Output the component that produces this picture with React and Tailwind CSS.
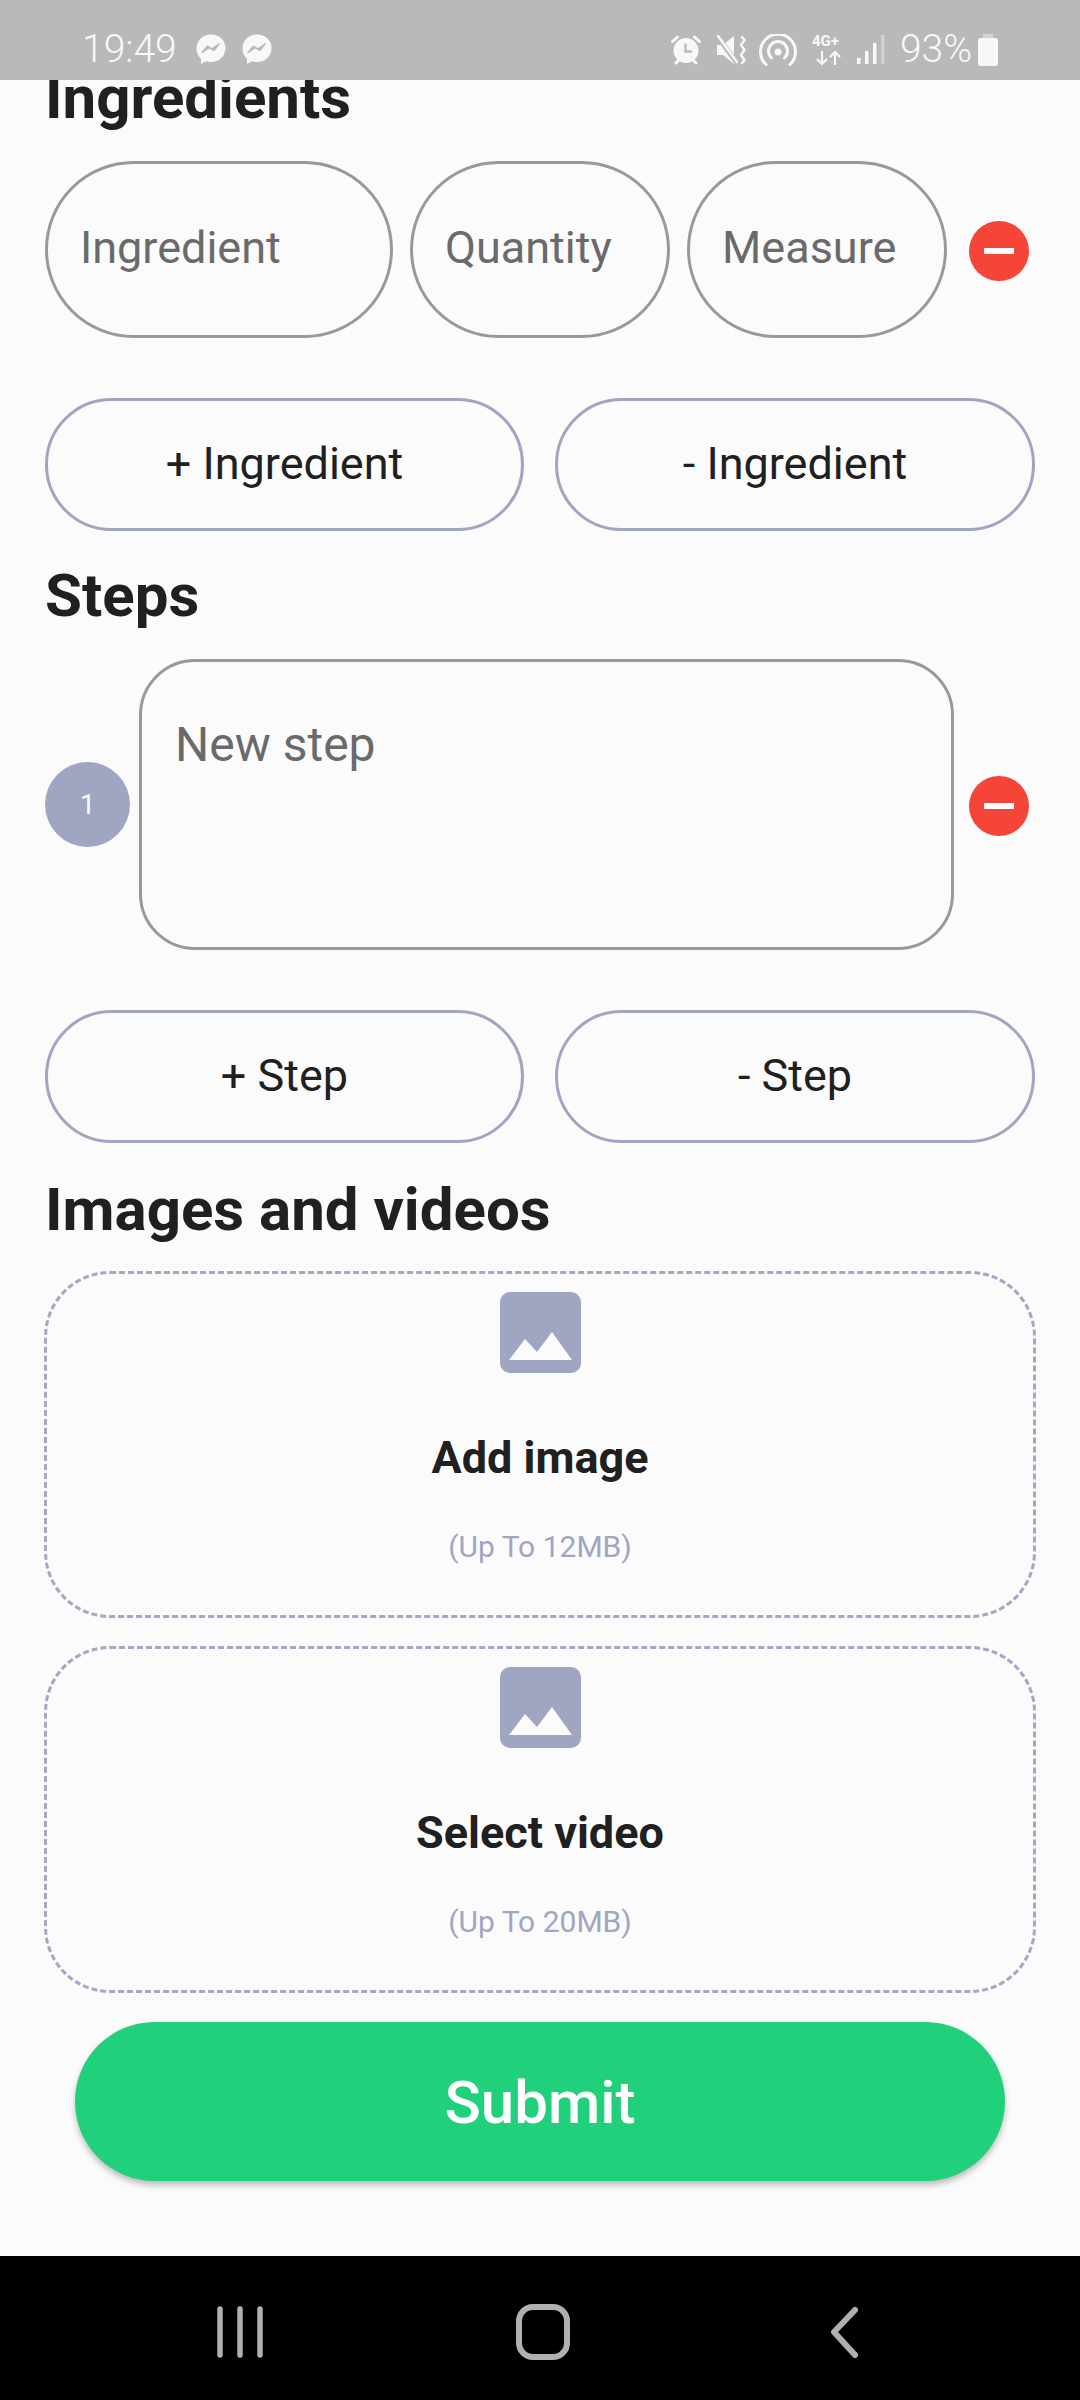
const font = { fontFamily: "Roboto, sans-serif" };

function Messenger() {
  return (
    <svg width="30" height="31" viewBox="0 0 30 31">
      <path
        d="M15 0.5C6.8 0.5 0.5 6.5 0.5 14.5c0 4.2 1.7 7.8 4.5 10.3v5.2l4.9-2.7c1.6.5 3.3.7 5.1.7 8.2 0 14.5-6 14.5-14S23.2.5 15 .5z"
        fill="#f8f8f8"
      />
      <path d="M6 18.5l5.4-6.4 4.2 3.2 7.6-5.6-5.4 6.8-4.2-3.2z" fill="#b9b9b9" stroke="#b9b9b9" strokeWidth="1.4" strokeLinejoin="round" />
    </svg>
  );
}

function StatusIcons() {
  return (
    <div className="flex items-center">
      {/* alarm */}
      <svg width="30" height="30" viewBox="0 0 30 30" className="mr-[15px]">
        <circle cx="15" cy="15.5" r="12.5" fill="#f8f8f8" />
        <path d="M14.5 8.5v8h6.5" fill="none" stroke="#b9b9b9" strokeWidth="2.4" />
        <path d="M1.5 6.5L6.5 2M28.5 6.5L23.5 2M5 28l2.5-2.5M25 28l-2.5-2.5" stroke="#f8f8f8" strokeWidth="3" strokeLinecap="round" />
      </svg>
      {/* mute + vibrate */}
      <svg width="30" height="30" viewBox="0 0 30 30" className="mr-[13px]">
        <path d="M1 10h6l11-9v28L7 20H1z" fill="#f8f8f8" />
        <path d="M1 1l20 27" stroke="#b9b9b9" strokeWidth="5" />
        <path d="M2 1l19 26" stroke="#f8f8f8" strokeWidth="2.5" strokeLinecap="round" />
        <path d="M26 2l2.5 3-3.5 5 3.5 5-3.5 5 3.5 5-2.5 3" fill="none" stroke="#f8f8f8" strokeWidth="2.4" strokeLinecap="round" />
      </svg>
      {/* hotspot */}
      <svg width="38" height="32" viewBox="0 0 38 32" className="mr-[15px]">
        <path d="M7 30.5A17.5 17.5 0 1 1 31 30.5" fill="none" stroke="#f8f8f8" strokeWidth="3" strokeLinecap="round" />
        <path d="M12.5 24A9.5 9.5 0 1 1 25.5 24" fill="none" stroke="#f8f8f8" strokeWidth="3" strokeLinecap="round" />
        <circle cx="19" cy="18" r="3.5" fill="#f8f8f8" />
      </svg>
      {/* 4G+ */}
      <div className="relative mr-[12px] h-[32px] w-[33px]">
        <div className="text-[15px] font-bold leading-[15px] text-[#f8f8f8]">4G+</div>
        <svg width="33" height="16" viewBox="0 0 33 16" className="absolute bottom-0 left-0">
          <path d="M10 1v13M5 9l5 5 5-5M23 15V2M18 7l5-5 5 5" fill="none" stroke="#f8f8f8" strokeWidth="2.2" />
        </svg>
      </div>
      {/* signal */}
      <svg width="28" height="30" viewBox="0 0 28 30" className="mr-[15px]">
        <rect x="0" y="23" width="3.5" height="6" fill="#f8f8f8" />
        <rect x="8" y="16" width="3.5" height="13" fill="#f8f8f8" />
        <rect x="16" y="8" width="3.5" height="21" fill="#f8f8f8" />
        <rect x="24" y="0" width="3.5" height="29" fill="#d0d0d0" />
      </svg>
      <span className="mr-[6px] text-[39px] font-light leading-none text-[#f8f8f8]">93%</span>
      {/* battery */}
      <svg width="20" height="32" viewBox="0 0 20 32">
        <path d="M6 0h8a1 1 0 0 1 1 1v3H5V1a1 1 0 0 1 1-1z" fill="#d4d4d4" />
        <path d="M3 4h14a3 3 0 0 1 3 3v22a3 3 0 0 1-3 3H3a3 3 0 0 1-3-3V7a3 3 0 0 1 3-3z" fill="#f8f8f8" />
      </svg>
    </div>
  );
}

function MinusBadge() {
  return (
    <div className="flex h-[60px] w-[60px] shrink-0 items-center justify-center rounded-full bg-[#f44538]">
      <div className="h-[6px] w-[30px] bg-[#fbfbfb]" />
    </div>
  );
}

function Heading({ children, offset = "pt-[2px]" }) {
  return (
    <div className={`flex h-[128px] items-center ${offset}`}>
      <h2 className="text-[60px] font-bold leading-none text-[#202020]">{children}</h2>
    </div>
  );
}

function PillField({ label, width }) {
  return (
    <div className={`flex h-[177px] items-center rounded-full border-[3px] border-[#999999] pb-[3px] pl-[32px] ${width}`}>
      <span className="text-[45px] text-[#6a6a6a]">{label}</span>
    </div>
  );
}

function ActionButtons({ name }) {
  return (
    <div className="mt-[60px] grid grid-cols-[479px_480px] gap-[31px]">
      {["+", "-"].map((sign) => (
        <button
          key={sign}
          className="flex h-[133px] items-center justify-center rounded-full border-[3px] border-[#a0a5c2] pb-[2px] text-[45px] text-[#202020]"
        >
          {sign} {name}
        </button>
      ))}
    </div>
  );
}

function UploadBox({ title, limit }) {
  return (
    <div className="-mx-px flex h-[347px] flex-col items-center rounded-[66px] border-[3px] border-dashed border-[#a4a8c4] pt-[18px]">
      <svg width="81" height="81" viewBox="0 0 81 81">
        <rect width="81" height="81" rx="10" fill="#a0a5c2" />
        <path d="M9 68L25 47l12 13 15-20 20 28z" fill="#fbfbfb" />
      </svg>
      <div className="mt-[59px] text-[45px] font-bold leading-[52px] text-[#202020]">{title}</div>
      <div className="mt-[44px] text-[30px] leading-[38px] text-[#a0a5c2]">{limit}</div>
    </div>
  );
}

export default function App() {
  return (
    <div className="relative flex h-[2400px] w-[1080px] flex-col overflow-hidden bg-[#fbfbfb]" style={font}>
      {/* status bar sits over the scrolled content */}
      <div className="absolute inset-x-0 top-0 z-10 flex h-[80px] items-center justify-between bg-[#b9b9b9] px-[82px] pt-[19px]">
        <div className="flex items-center">
          <span className="mr-[19px] text-[39px] font-light leading-none text-[#f8f8f8]">19:49</span>
          <div className="flex gap-[16px]">
            <Messenger />
            <Messenger />
          </div>
        </div>
        <StatusIcons />
      </div>

      <main className="flex-1 px-[45px] pt-[33px]">
        <Heading>Ingredients</Heading>
        <div className="flex items-center gap-[17px]">
          <PillField label="Ingredient" width="w-[348px]" />
          <PillField label="Quantity" width="w-[260px]" />
          <PillField label="Measure" width="w-[260px]" />
          <div className="ml-[5px] mt-[2px]">
            <MinusBadge />
          </div>
        </div>
        <ActionButtons name="Ingredient" />

        <Heading>Steps</Heading>
        <div className="flex items-center">
          <div className="flex h-[85px] w-[85px] shrink-0 items-center justify-center rounded-full bg-[#a0a5c2] text-[28px] text-[#fbfbfb]">
            1
          </div>
          <div className="ml-[9px] h-[291px] w-[815px] rounded-[56px] border-[3px] border-[#999999] pl-[33px] pt-[53px]">
            <span className="text-[48px] leading-[60px] text-[#6a6a6a]">New step</span>
          </div>
          <div className="ml-[15px] mt-[2px]">
            <MinusBadge />
          </div>
        </div>
        <ActionButtons name="Step" />

        <Heading offset="pt-[5px]">Images and videos</Heading>
        <div className="flex flex-col gap-[28px]">
          <UploadBox title="Add image" limit="(Up To 12MB)" />
          <UploadBox title="Select video" limit="(Up To 20MB)" />
        </div>
        <button className="mx-[30px] mt-[29px] h-[159px] w-[930px] rounded-full bg-[#20d07b] pt-[3px] text-[60px] font-medium text-white shadow-[0_4px_6px_rgba(0,0,0,0.25)]">
          Submit
        </button>
      </main>

      <nav className="flex h-[144px] items-center bg-black pt-[8px]">
        <svg width="1080" height="56" viewBox="0 0 1080 56" className="block">
          <path d="M220 5v46M240 5v46M260 5v46" stroke="#b0b0b0" strokeWidth="5.5" strokeLinecap="round" />
          <rect x="519" y="3" width="48" height="50" rx="14" fill="none" stroke="#b0b0b0" strokeWidth="6" />
          <path d="M855 6L834 28l21 23" fill="none" stroke="#b0b0b0" strokeWidth="6" strokeLinecap="round" strokeLinejoin="round" />
        </svg>
      </nav>
    </div>
  );
}
